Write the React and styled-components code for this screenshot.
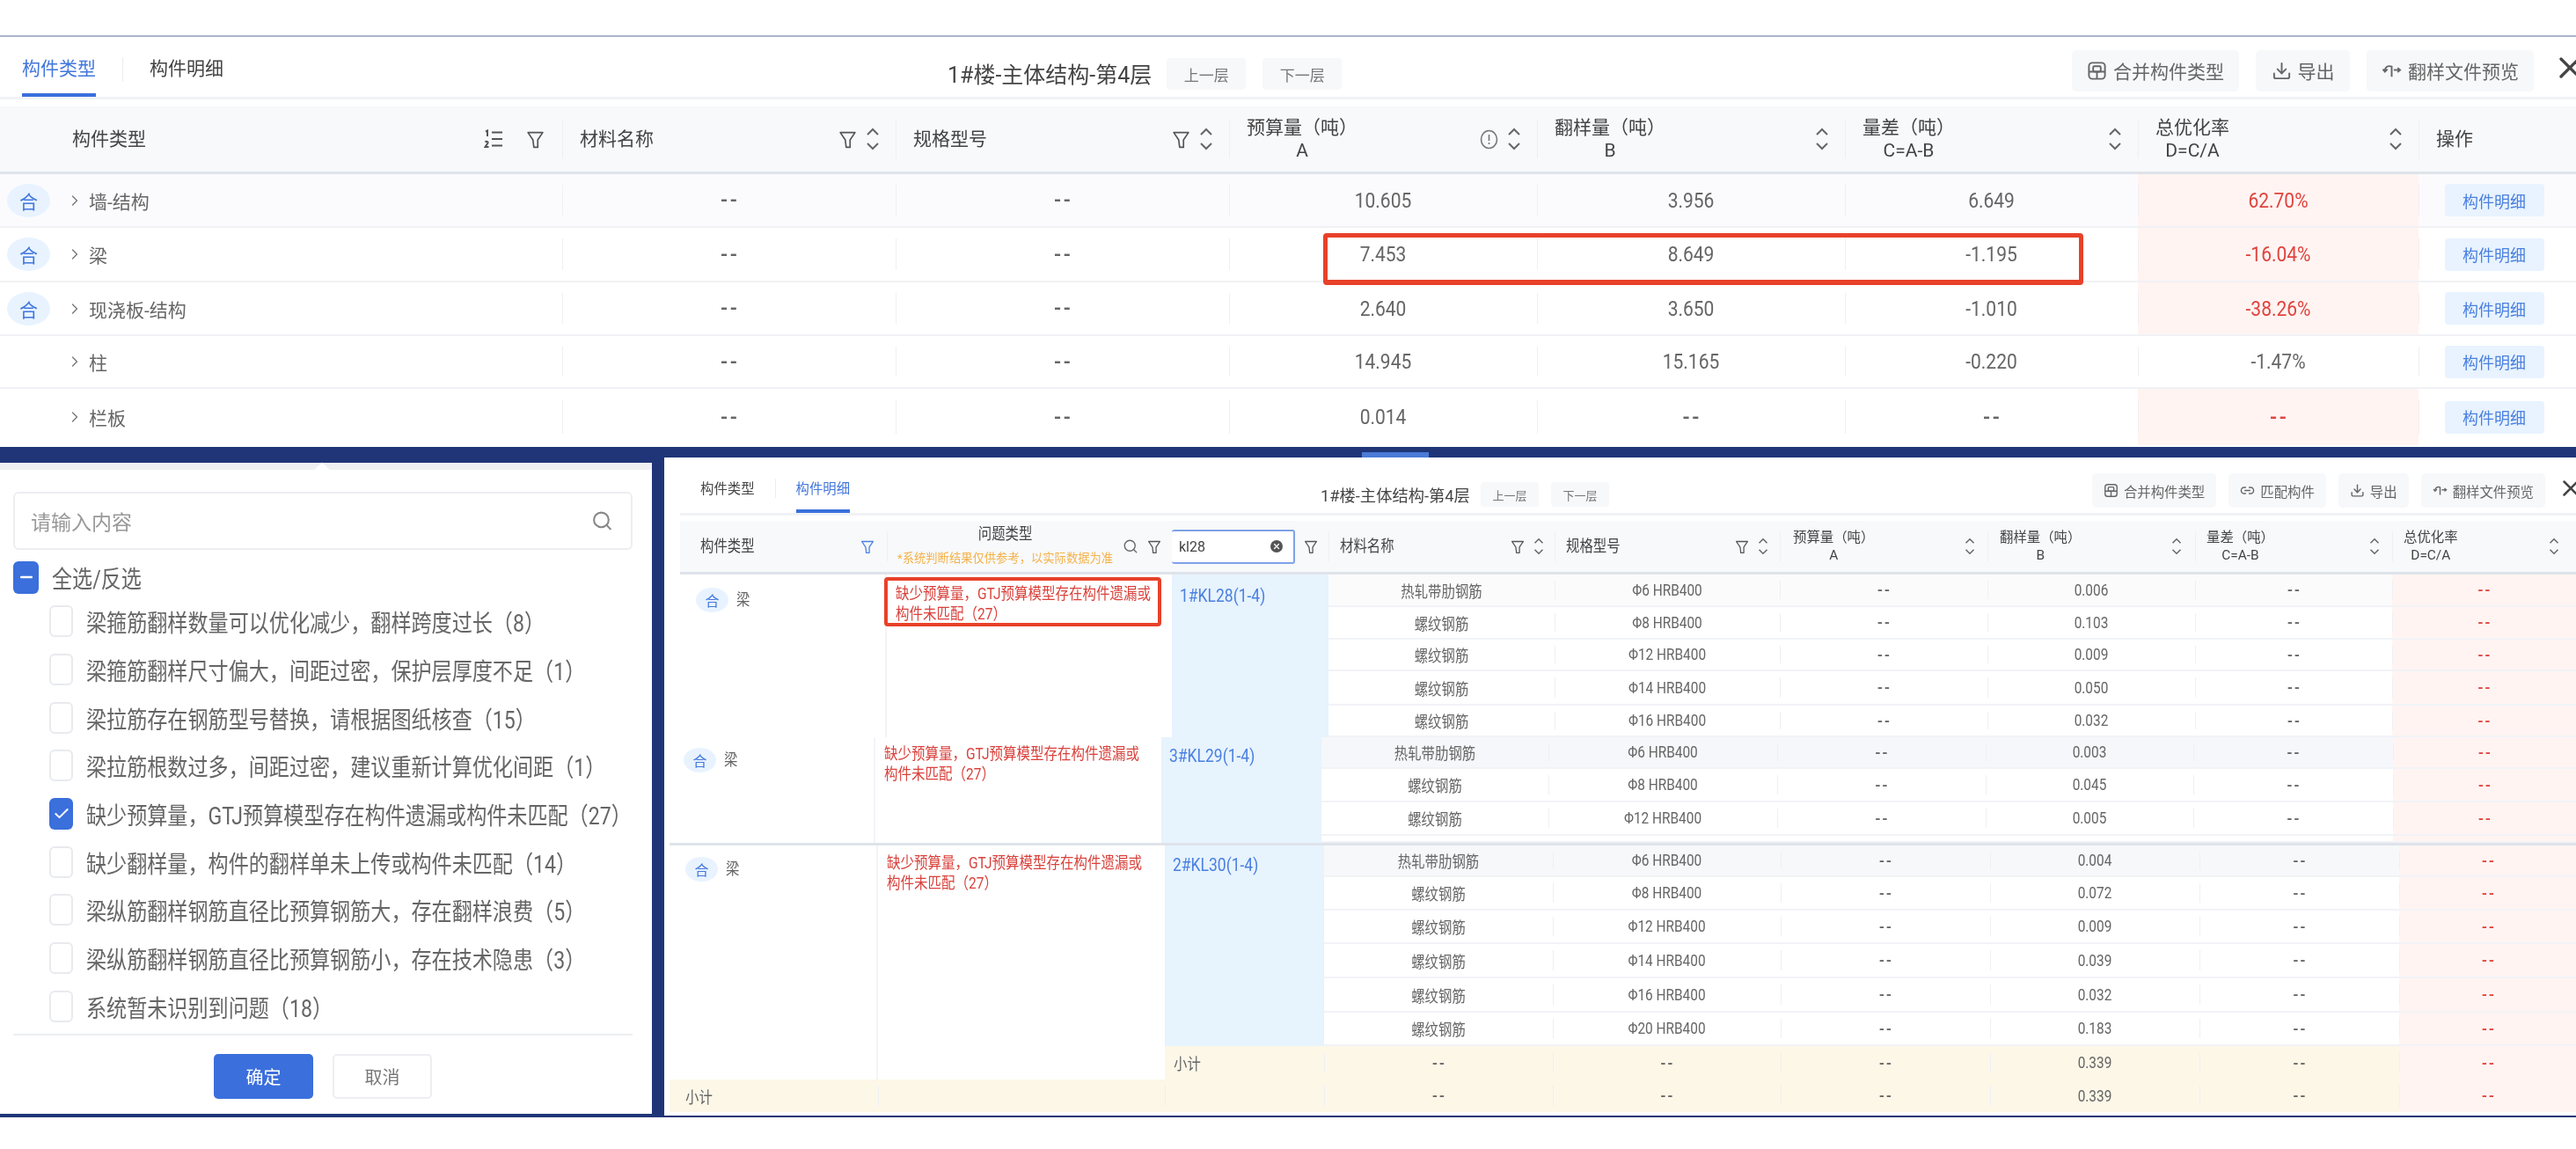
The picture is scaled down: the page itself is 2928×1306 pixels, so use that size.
import React from "react";
import styled, { createGlobalStyle } from "styled-components";
import { Search, X, Check, Minus, Download, Link2, ChevronRight } from "lucide-react";

const GlobalStyle = createGlobalStyle`
  html, body {
    margin: 0;
    padding: 0;
    background: #fff;
  }
  * {
    box-sizing: border-box;
  }
`;

const Page = styled.div`
  width: 2928px;
  height: 1306px;
  overflow: hidden;
  background: #fff;
  color: #666;
  font-family: Roboto, "Noto Sans CJK SC", sans-serif;
  filter: blur(0.6px);
`;

const TopGap = styled.div`
  height: 42px;
  border-bottom: 2px solid #aab6cd;
`;

const OverPanel = styled.section`
  position: relative;
  height: 466px;
  background: #fff;
`;

const Bar = styled.div`
  display: flex;
  align-items: center;
  overflow: hidden;
  height: ${(p) => (p.$small ? "66px" : "71px")};
  margin-left: ${(p) => (p.$small ? "18px" : "0")};
  border-bottom: 3px solid #f0f2f6;
  font-size: ${(p) => (p.$small ? "15.4px" : "21px")};
`;

const Tabs = styled.div`
  display: flex;
  align-items: stretch;
  align-self: stretch;
  flex: none;
  width: ${(p) => (p.$small ? "728px" : "1077px")};
  padding-left: ${(p) => (p.$small ? "23px" : "25px")};
`;

const Tab = styled.div`
  display: flex;
  align-items: center;
  padding-top: ${(p) => (p.$small ? "8px" : "3px")};
  color: ${(p) => (p.$active ? "#4277dd" : "#444")};
  border-bottom: ${(p) => (p.$active ? "4px solid #3a6fdc" : "4px solid transparent")};
`;

const TabSep = styled.span`
  flex: none;
  align-self: center;
  width: 1px;
  height: ${(p) => (p.$small ? "22px" : "28px")};
  margin: ${(p) => (p.$small ? "6px 23px 0" : "6px 30px 0")};
  background: #eceef2;
`;

const Title = styled.div`
  flex: none;
  color: #444;
  font-size: ${(p) => (p.$small ? "18.3px" : "25px")};
  margin-top: ${(p) => (p.$small ? "21px" : "14px")};
  margin-right: ${(p) => (p.$small ? "12px" : "17px")};
`;

const FloorBtn = styled.div`
  flex: none;
  display: flex;
  align-items: center;
  justify-content: center;
  width: ${(p) => (p.$small ? "66px" : "90px")};
  height: ${(p) => (p.$small ? "28px" : "36px")};
  margin-top: ${(p) => (p.$small ? "21px" : "16px")};
  margin-right: ${(p) => (p.$small ? "14px" : "19px")};
  border-radius: 4px;
  background: #f7f8fa;
  color: #777;
  font-size: ${(p) => (p.$small ? "13px" : "17px")};
`;

const Actions = styled.div`
  flex: none;
  display: flex;
  align-items: center;
  margin-left: auto;
  gap: ${(p) => (p.$small ? "14px" : "19px")};
  margin-top: ${(p) => (p.$small ? "12px" : "8px")};
`;

const ToolBtn = styled.div`
  display: flex;
  align-items: center;
  justify-content: center;
  white-space: nowrap;
  min-width: ${(p) => p.$min || 0}px;
  height: ${(p) => (p.$small ? "39px" : "47px")};
  padding: ${(p) => (p.$small ? "0 13px" : "0 17px")};
  gap: ${(p) => (p.$small ? "6px" : "7px")};
  border-radius: 5px;
  background: #f7f8fa;
  color: #666;
  svg {
    flex: none;
    width: ${(p) => (p.$small ? "17px" : "23px")};
    height: ${(p) => (p.$small ? "17px" : "23px")};
  }
`;

const CloseWrap = styled.div`
  flex: none;
  display: flex;
  margin-left: ${(p) => (p.$small ? "14px" : "21px")};
  margin-right: ${(p) => (p.$small ? "-9px" : "-13px")};
  margin-top: ${(p) => (p.$small ? "7px" : "2px")};
  color: #444;
  svg {
    width: ${(p) => (p.$small ? "30px" : "40px")};
    height: ${(p) => (p.$small ? "30px" : "40px")};
  }
`;

const Row = styled.div`
  display: grid;
  grid-template-columns: ${(p) => p.$cols};
  height: ${(p) => p.$h}px;
  background: ${(p) => p.$bg || "transparent"};
  border-bottom: ${(p) => p.$line || "2px solid #f2f3f7"};
`;

const Cell = styled.div`
  position: relative;
  display: flex;
  align-items: center;
  justify-content: center;
  min-width: 0;
  white-space: nowrap;
  background: ${(p) => (p.$pink ? "#fff4f2" : "transparent")};
  color: ${(p) => (p.$red ? "#e0443e" : "#666")};
  &::before {
    content: "";
    display: ${(p) => (p.$noSep ? "none" : "block")};
    position: absolute;
    left: 0;
    top: 20%;
    bottom: 20%;
    width: 1px;
    background: #eef0f4;
  }
`;

const Dash = styled.span`
  font-weight: 700;
  letter-spacing: 0.1em;
  margin-right: -0.1em;
  font-size: 1.05em;
`;

const Num = styled.span`
  display: inline-block;
  transform: scaleY(1.12);
`;

const Tall = styled.span`
  display: inline-block;
  transform: scaleY(1.18);
`;

const OverHead = styled(Row)`
  margin-top: 8px;
  background: #f8f9fb;
  border-bottom: 3px solid #dfe3ea;
  font-size: 21px;
  color: #444;
`;

const HeadCell = styled(Cell)`
  justify-content: flex-start;
  padding: 0 ${(p) => p.$right ?? 18}px 0 ${(p) => p.$left ?? 20}px;
  gap: 10px;
  color: #444;
`;

const HeadLabel = styled.div`
  margin-right: auto;
  text-align: center;
  line-height: 26px;
`;

const OverBody = styled.div`
  font-size: 21px;
`;

const LeadCell = styled(Cell)`
  justify-content: flex-start;
  padding-left: 8px;
  svg {
    width: 20px;
    height: 24px;
    margin-right: 6px;
    color: #777;
  }
`;

const HeB = styled.span`
  flex: none;
  display: flex;
  align-items: center;
  justify-content: center;
  width: ${(p) => (p.$small ? "37px" : "49px")};
  height: ${(p) => (p.$small ? "28px" : "38px")};
  margin-right: ${(p) => (p.$small ? "9px" : "18px")};
  border-radius: 50%;
  background: #e8f3ff;
  color: #4277dd;
  font-size: ${(p) => (p.$small ? "16px" : "21px")};
`;

const NoBadge = styled.span`
  flex: none;
  width: 49px;
  margin-right: 18px;
`;

const DetailBtn = styled.div`
  display: flex;
  align-items: center;
  justify-content: center;
  width: 113px;
  height: 37px;
  margin-left: -7px;
  border-radius: 4px;
  background: #e8f3ff;
  color: #4a80e0;
  font-size: 18px;
`;

const RedBox = styled.div`
  position: absolute;
  border-style: solid;
  border-color: #e8412a;
  border-radius: 4px;
  pointer-events: none;
`;

const BigRedBox = styled(RedBox)`
  left: 1504px;
  top: 223px;
  width: 864px;
  height: 59px;
  border-width: 5px 5px 6px;
`;

const SmallRedBox = styled(RedBox)`
  left: 232px;
  top: 3px;
  width: 315px;
  height: 56px;
  border-width: 4px;
`;

const BottomRow = styled.div`
  position: relative;
  display: flex;
  align-items: flex-start;
  height: 762px;
  background: #1f3577;
`;

const TabChip = styled.div`
  position: absolute;
  left: 1548px;
  top: 6px;
  width: 76px;
  height: 6px;
  background: #4a7bd8;
`;

const Filter = styled.aside`
  position: relative;
  flex: none;
  display: flex;
  flex-direction: column;
  width: 741px;
  height: 740px;
  margin-top: 18px;
  padding: 25px 22px 0 15px;
  background: #fff;
  border-top: 8px solid #eff0f2;
`;

const Caret = styled.div`
  position: absolute;
  left: 356px;
  top: -8px;
  width: 20px;
  height: 20px;
  background: #fff;
  transform: rotate(45deg) scale(0.75);
`;

const SearchBox = styled.div`
  flex: none;
  display: flex;
  align-items: center;
  justify-content: space-between;
  height: 66px;
  padding: 0 18px;
  border: 2px solid #eceef2;
  border-radius: 6px;
  color: #999;
  font-size: 23px;
  svg {
    width: 25px;
    height: 30px;
    color: #888;
    margin-right: 2px;
  }
`;

const AllLine = styled.div`
  flex: none;
  display: flex;
  align-items: center;
  height: 38px;
  margin-top: 12px;
  margin-bottom: 4px;
  gap: 15px;
`;

const Option = styled.div`
  flex: none;
  display: flex;
  align-items: center;
  height: 54.7px;
  padding-left: 41px;
  gap: 15px;
`;

const Box = styled.span`
  flex: none;
  display: flex;
  align-items: center;
  justify-content: center;
  width: ${(p) => (p.$all ? "29px" : "27px")};
  height: ${(p) => (p.$all ? "37px" : "36px")};
  border-radius: 6px;
  border: ${(p) => (p.$on ? "none" : "2px solid #e8eaee")};
  background: ${(p) => (p.$on ? "#3a6fdc" : "#fff")};
  color: #fff;
  svg {
    width: 20px;
    height: 20px;
  }
`;

const Label = styled.span`
  display: inline-block;
  white-space: nowrap;
  font-size: 23.1px;
  color: #666;
  transform: scaleY(1.2);
`;

const FilterFoot = styled.div`
  flex: none;
  display: flex;
  justify-content: center;
  gap: 22px;
  margin-top: 4px;
  padding-top: 21px;
  padding-right: 0;
  border-top: 2px solid #eceef2;
`;

const FootBtn = styled.div`
  display: flex;
  align-items: center;
  justify-content: center;
  width: 113px;
  height: 51px;
  border-radius: 5px;
  font-size: 20px;
  background: ${(p) => (p.$primary ? "#3a6fdc" : "#fff")};
  color: ${(p) => (p.$primary ? "#fff" : "#777")};
  border: ${(p) => (p.$primary ? "none" : "2px solid #eceef2")};
`;

const DetailPanel = styled.section`
  flex: none;
  position: relative;
  display: flex;
  flex-direction: column;
  width: 2173px;
  height: 748px;
  margin-top: 12px;
  margin-left: 14px;
  background: #fff;
  font-size: 15.4px;
`;

const DetailHead = styled(Row)`
  margin-top: 6px;
  margin-left: 18px;
  background: #f8f9fb;
  border-bottom: 3px solid #dfe3ea;
  font-size: 15.4px;
`;

const SmallHeadLabel = styled(HeadLabel)`
  line-height: 20px;
`;

const IssueHead = styled.div`
  margin-right: auto;
  text-align: center;
  line-height: 27px;
`;

const IssueNote = styled.div`
  color: #f4b24a;
  font-size: 13.3px;
`;

const KeyInput = styled.div`
  display: flex;
  align-items: center;
  justify-content: space-between;
  width: 140px;
  height: 39px;
  padding: 0 12px 0 8px;
  background: #fff;
  border: 2px solid #7ea3e8;
  border-left: none;
  border-radius: 3px;
  color: #444;
  font-size: 16px;
`;

const Clear = styled.span`
  display: flex;
  align-items: center;
  justify-content: center;
  width: 14px;
  height: 14px;
  border-radius: 50%;
  background: #555;
  color: #fff;
  svg {
    width: 10px;
    height: 10px;
  }
`;

const Group = styled.div`
  position: relative;
  flex: none;
  display: grid;
  grid-template-columns: ${(p) => p.$cols};
  margin-left: ${(p) => p.$left}px;
  border-top: ${(p) => p.$line || "none"};
`;

const TypeCell = styled.div`
  display: flex;
  align-items: flex-start;
  padding: ${(p) => p.$pad} 0 0 ${(p) => p.$lead}px;
  border-right: 2px solid #f3f4f9;
`;

const TypeText = styled.span`
  display: inline-block;
  line-height: 28px;
  font-size: 15.4px;
  color: #666;
  transform: scaleY(1.18);
`;

const IssueCell = styled.div`
  padding: ${(p) => p.$pad} 10px 0 10px;
  color: #d9423c;
  white-space: pre-line;
  line-height: 18.5px;
  font-size: 15.5px;
`;

const RightSide = styled.div`
  display: flex;
  flex-direction: column;
  min-width: 0;
`;

const DetailGrid = styled.div`
  display: grid;
  grid-template-columns: ${(p) => p.$cols};
`;

const CompCell = styled.div`
  padding: ${(p) => p.$pad} 0 0 9px;
  background: #e7f3fd;
  color: #4a80e0;
  line-height: 18.5px;
  font-size: 17.5px;
`;

const SubRow = styled(Row)`
  background: #fdf7e8;
  border-bottom: none;
`;

const SubName = styled(Cell)`
  justify-content: flex-start;
  padding-left: ${(p) => p.$pad ?? 10}px;
`;

const TotalBand = styled.div`
  flex: none;
  margin-left: 6px;
`;

const RateCell = styled(Cell)`
  color: #e0443e;
  background: #fff4f2;
`;

function FilterIcon({ small, color = "#555" }) {
  return (
    <svg width={small ? 16 : 21} height={small ? 17 : 21} viewBox="0 0 20 20" fill="none" stroke={color} strokeWidth="1.6" strokeLinejoin="round" style={{ flex: "none" }}>
      <path d="M2 2.5H18L12.6 10.5V18.5H8.4L7.4 10.5Z" />
    </svg>
  );
}

function SortIcon({ small }) {
  return (
    <svg width={small ? 12 : 16} height={small ? 22 : 26} viewBox="0 0 16 26" fill="none" stroke="#666" strokeWidth="2" style={{ flex: "none" }}>
      <path d="M2 8L8 2L14 8" />
      <path d="M2 18L8 24L14 18" />
    </svg>
  );
}

function OrderIcon() {
  return (
    <svg width="22" height="22" viewBox="0 0 22 22" fill="none" stroke="#555" strokeWidth="2" style={{ flex: "none" }}>
      <path d="M9 3.5H21M9 11H21M9 18.5H21" />
      <path d="M2 2.5L4 1.5V8" />
      <path d="M1.5 14.5C3 13 5 14 4.5 15.5L1.5 20H5.5" />
    </svg>
  );
}

function NoticeIcon() {
  return (
    <svg width="21" height="23" viewBox="0 0 21 23" fill="none" stroke="#777" strokeWidth="1.6" style={{ flex: "none" }}>
      <ellipse cx="10.5" cy="11.5" rx="9" ry="10" />
      <path d="M10.5 6V13M10.5 15V17" />
    </svg>
  );
}

function MergeIcon() {
  return (
    <svg viewBox="0 0 24 24" fill="none" stroke="currentColor" strokeWidth="2">
      <rect x="2.5" y="2.5" width="19" height="19" rx="4" />
      <rect x="7.5" y="6.5" width="9" height="6.5" rx="1.5" />
      <path d="M2.5 13H21.5M12 13V21.5" />
    </svg>
  );
}

function PreviewIcon() {
  return (
    <svg viewBox="0 0 24 24" fill="none" stroke="currentColor" strokeWidth="2">
      <path d="M12 19V7C8 5.5 4 7 4 12" />
      <path d="M1.5 10L4 13L7 10" />
      <path d="M14.5 11H21" />
      <path d="M19 8.5L22 11L19 13.5" />
    </svg>
  );
}

const val = (v) => (v === "--" ? <Dash>--</Dash> : <Num>{v}</Num>);

const overCols = "639px 379px 379px 350px 350px 333px 319px 179px";

const overRows = [
  { name: "墙-结构", merged: true, a: "10.605", b: "3.956", c: "6.649", d: "62.70%", red: true },
  { name: "梁", merged: true, a: "7.453", b: "8.649", c: "-1.195", d: "-16.04%", red: true },
  { name: "现浇板-结构", merged: true, a: "2.640", b: "3.650", c: "-1.010", d: "-38.26%", red: true },
  { name: "柱", a: "14.945", b: "15.165", c: "-0.220", d: "-1.47%" },
  { name: "栏板", a: "0.014", b: "--", c: "--", d: "--", red: true },
];

const overHeights = [61, 62, 61, 60, 64];

const issues = [
  { text: "梁箍筋翻样数量可以优化减少，翻样跨度过长（8）" },
  { text: "梁箍筋翻样尺寸偏大，间距过密，保护层厚度不足（1）" },
  { text: "梁拉筋存在钢筋型号替换，请根据图纸核查（15）" },
  { text: "梁拉筋根数过多，间距过密，建议重新计算优化间距（1）" },
  { text: "缺少预算量，GTJ预算模型存在构件遗漏或构件未匹配（27）", on: true },
  { text: "缺少翻样量，构件的翻样单未上传或构件未匹配（14）" },
  { text: "梁纵筋翻样钢筋直径比预算钢筋大，存在翻样浪费（5）" },
  { text: "梁纵筋翻样钢筋直径比预算钢筋小，存在技术隐患（3）" },
  { text: "系统暂未识别到问题（18）" },
];

const ISSUE_TEXT = "缺少预算量，GTJ预算模型存在构件遗漏或\n构件未匹配（27）";

const groups = [
  {
    left: 18,
    cols: [235, 324, 178, 257, 256, 236, 236, 224, 209],
    lead: 18,
    pad: "15px",
    comp: "1#KL28(1-4)",
    rows: [
      ["热轧带肋钢筋", "Φ6 HRB400", "0.006", 37, "#fbfbfc"],
      ["螺纹钢筋", "Φ8 HRB400", "0.103", 37],
      ["螺纹钢筋", "Φ12 HRB400", "0.009", 36],
      ["螺纹钢筋", "Φ14 HRB400", "0.050", 39],
      ["螺纹钢筋", "Φ16 HRB400", "0.032", 36],
    ],
  },
  {
    left: 0,
    cols: [240, 325, 182, 258, 260, 237, 236, 227, 208],
    lead: 22,
    pad: "12px",
    comp: "3#KL29(1-4)",
    rows: [
      ["热轧带肋钢筋", "Φ6 HRB400", "0.003", 36, "#f6f7fa"],
      ["螺纹钢筋", "Φ8 HRB400", "0.045", 38],
      ["螺纹钢筋", "Φ12 HRB400", "0.005", 38],
      ["", "", "", 8],
    ],
  },
  {
    left: 6,
    cols: [237, 326, 181, 260, 259, 238, 238, 227, 202],
    lead: 18,
    pad: "13px",
    line: "3px solid #dfe3ea",
    comp: "2#KL30(1-4)",
    rows: [
      ["热轧带肋钢筋", "Φ6 HRB400", "0.004", 36, "#f7f8fa"],
      ["螺纹钢筋", "Φ8 HRB400", "0.072", 38],
      ["螺纹钢筋", "Φ12 HRB400", "0.009", 38],
      ["螺纹钢筋", "Φ14 HRB400", "0.039", 39],
      ["螺纹钢筋", "Φ16 HRB400", "0.032", 39],
      ["螺纹钢筋", "Φ20 HRB400", "0.183", 38],
    ],
    sub: true,
  },
];

const px = (list) => list.map((n) => n + "px").join(" ");

function OverviewTable() {
  return (
    <>
      <OverHead $cols={overCols} $h={77}>
        <HeadCell $noSep $left={82} $right={20}>
          <HeadLabel>构件类型</HeadLabel>
          <OrderIcon />
          <span style={{ width: 6 }} />
          <FilterIcon />
        </HeadCell>
        <HeadCell>
          <HeadLabel>材料名称</HeadLabel>
          <FilterIcon />
          <SortIcon />
        </HeadCell>
        <HeadCell>
          <HeadLabel>规格型号</HeadLabel>
          <FilterIcon />
          <SortIcon />
        </HeadCell>
        <HeadCell>
          <HeadLabel>预算量（吨）<br />A</HeadLabel>
          <NoticeIcon />
          <SortIcon />
        </HeadCell>
        <HeadCell>
          <HeadLabel>翻样量（吨）<br />B</HeadLabel>
          <SortIcon />
        </HeadCell>
        <HeadCell>
          <HeadLabel>量差（吨）<br />C=A-B</HeadLabel>
          <SortIcon />
        </HeadCell>
        <HeadCell>
          <HeadLabel>总优化率<br />D=C/A</HeadLabel>
          <SortIcon />
        </HeadCell>
        <HeadCell>
          <HeadLabel>操作</HeadLabel>
        </HeadCell>
      </OverHead>
      <OverBody>
        {overRows.map((r, i) => (
          <Row key={r.name} $cols={overCols} $h={overHeights[i]} $bg={i === 0 ? "#fbfbfd" : "#fff"} $line={i === 4 ? "none" : "2px solid #f1f2f5"}>
            <LeadCell $noSep>
              {r.merged ? <HeB>合</HeB> : <NoBadge />}
              <ChevronRight strokeWidth={1.6} />
              {r.name}
            </LeadCell>
            <Cell>{val("--")}</Cell>
            <Cell>{val("--")}</Cell>
            <Cell>{val(r.a)}</Cell>
            <Cell>{val(r.b)}</Cell>
            <Cell>{val(r.c)}</Cell>
            <Cell $pink={r.red} $red={r.red}>{val(r.d)}</Cell>
            <Cell>
              <DetailBtn>构件明细</DetailBtn>
            </Cell>
          </Row>
        ))}
      </OverBody>
    </>
  );
}

function DetailGroup({ group, children }) {
  const detailCols = group.cols.slice(3);
  return (
    <Group $cols={`${group.cols[0]}px ${group.cols[1]}px 1fr`} $left={group.left} $line={group.line}>
      <TypeCell $pad={group.pad} $lead={group.lead}>
        <HeB $small>合</HeB>
        <TypeText>梁</TypeText>
      </TypeCell>
      <IssueCell $pad={group.pad}><Tall>{ISSUE_TEXT}</Tall></IssueCell>
      <RightSide>
        <DetailGrid $cols={`${group.cols[2]}px 1fr`}>
          <CompCell $pad={group.pad}><Tall>{group.comp}</Tall></CompCell>
          <div>
            {group.rows.map((r, i) => (
              <Row key={i} $cols={px(detailCols)} $h={r[3]} $bg={r[4]}>
                <Cell $noSep><Tall>{r[0]}</Tall></Cell>
                <Cell $noSep={!r[0]}><Tall>{r[1]}</Tall></Cell>
                <Cell $noSep={!r[0]}>{r[0] && val("--")}</Cell>
                <Cell $noSep={!r[0]}><Tall>{r[2]}</Tall></Cell>
                <Cell $noSep={!r[0]}>{r[0] && val("--")}</Cell>
                <RateCell $noSep={!r[0]}>{r[0] && val("--")}</RateCell>
              </Row>
            ))}
          </div>
        </DetailGrid>
        {group.sub && (
          <SubRow $cols={`${group.cols[2]}px ${px(detailCols)}`} $h={38}>
            <SubName $noSep><Tall>小计</Tall></SubName>
            <Cell>{val("--")}</Cell>
            <Cell>{val("--")}</Cell>
            <Cell>{val("--")}</Cell>
            <Cell><Tall>0.339</Tall></Cell>
            <Cell>{val("--")}</Cell>
            <RateCell>{val("--")}</RateCell>
          </SubRow>
        )}
      </RightSide>
      {children}
    </Group>
  );
}

export default function App() {
  const last = groups[2].cols;
  return (
    <>
      <GlobalStyle />
      <Page>
        <TopGap />
        <OverPanel>
          <Bar>
            <Tabs>
              <Tab $active>构件类型</Tab>
              <TabSep />
              <Tab>构件明细</Tab>
            </Tabs>
            <Title>1#楼-主体结构-第4层</Title>
            <FloorBtn>上一层</FloorBtn>
            <FloorBtn>下一层</FloorBtn>
            <Actions>
              <ToolBtn><MergeIcon />合并构件类型</ToolBtn>
              <ToolBtn $min={107}><Download strokeWidth={2} />导出</ToolBtn>
              <ToolBtn><PreviewIcon />翻样文件预览</ToolBtn>
            </Actions>
            <CloseWrap><X /></CloseWrap>
          </Bar>
          <OverviewTable />
          <BigRedBox />
        </OverPanel>

        <BottomRow>
          <TabChip />
          <Filter>
            <Caret />
            <SearchBox>
              请输入内容
              <Search strokeWidth={2} />
            </SearchBox>
            <AllLine>
              <Box $all $on><Minus strokeWidth={3} /></Box>
              <Label>全选/反选</Label>
            </AllLine>
            {issues.map((it) => (
              <Option key={it.text}>
                <Box $on={it.on}>{it.on && <Check strokeWidth={2.4} />}</Box>
                <Label>{it.text}</Label>
              </Option>
            ))}
            <FilterFoot>
              <FootBtn $primary>确定</FootBtn>
              <FootBtn>取消</FootBtn>
            </FilterFoot>
          </Filter>

          <DetailPanel>
            <Bar $small>
              <Tabs $small>
                <Tab $small>构件类型</Tab>
                <TabSep $small />
                <Tab $small $active>构件明细</Tab>
              </Tabs>
              <Title $small>1#楼-主体结构-第4层</Title>
              <FloorBtn $small>上一层</FloorBtn>
              <FloorBtn $small>下一层</FloorBtn>
              <Actions $small>
                <ToolBtn $small><MergeIcon />合并构件类型</ToolBtn>
                <ToolBtn $small><Link2 strokeWidth={2} />匹配构件</ToolBtn>
                <ToolBtn $small><Download strokeWidth={2} />导出</ToolBtn>
                <ToolBtn $small><PreviewIcon />翻样文件预览</ToolBtn>
              </Actions>
              <CloseWrap $small><X /></CloseWrap>
            </Bar>
            <DetailHead $cols={px(groups[0].cols)} $h={61}>
              <HeadCell $noSep $left={23} $right={14}>
                <HeadLabel><Tall>构件类型</Tall></HeadLabel>
                <FilterIcon small color="#4a80e0" />
              </HeadCell>
              <HeadCell $left={12} $right={12}>
                <IssueHead>
                  <Tall>问题类型</Tall>
                  <IssueNote>*系统判断结果仅供参考，以实际数据为准</IssueNote>
                </IssueHead>
                <Search size={18} color="#666" strokeWidth={1.8} />
                <FilterIcon small />
              </HeadCell>
              <HeadCell $noSep $left={0} $right={6}>
                <KeyInput>
                  kl28
                  <Clear><X strokeWidth={3} /></Clear>
                </KeyInput>
                <FilterIcon small />
              </HeadCell>
              <HeadCell $left={13} $right={12}>
                <HeadLabel><Tall>材料名称</Tall></HeadLabel>
                <FilterIcon small />
                <SortIcon small />
              </HeadCell>
              <HeadCell $left={13} $right={13}>
                <HeadLabel><Tall>规格型号</Tall></HeadLabel>
                <FilterIcon small />
                <SortIcon small />
              </HeadCell>
              <HeadCell $left={15} $right={14}>
                <SmallHeadLabel>预算量（吨）<br />A</SmallHeadLabel>
                <SortIcon small />
              </HeadCell>
              <HeadCell $left={14} $right={15}>
                <SmallHeadLabel>翻样量（吨）<br />B</SmallHeadLabel>
                <SortIcon small />
              </HeadCell>
              <HeadCell $left={13} $right={14}>
                <SmallHeadLabel>量差（吨）<br />C=A-B</SmallHeadLabel>
                <SortIcon small />
              </HeadCell>
              <HeadCell $left={13} $right={19}>
                <SmallHeadLabel>总优化率<br />D=C/A</SmallHeadLabel>
                <SortIcon small />
              </HeadCell>
            </DetailHead>

            <DetailGroup group={groups[0]}>
              <SmallRedBox />
            </DetailGroup>
            <DetailGroup group={groups[1]} />
            <DetailGroup group={groups[2]} />

            <TotalBand>
              <SubRow $cols={px(last)} $h={37}>
                <SubName $noSep $pad={18}><Tall>小计</Tall></SubName>
                <Cell />
                <Cell />
                <Cell>{val("--")}</Cell>
                <Cell>{val("--")}</Cell>
                <Cell>{val("--")}</Cell>
                <Cell><Tall>0.339</Tall></Cell>
                <Cell>{val("--")}</Cell>
                <RateCell>{val("--")}</RateCell>
              </SubRow>
            </TotalBand>
          </DetailPanel>
        </BottomRow>
      </Page>
    </>
  );
}
